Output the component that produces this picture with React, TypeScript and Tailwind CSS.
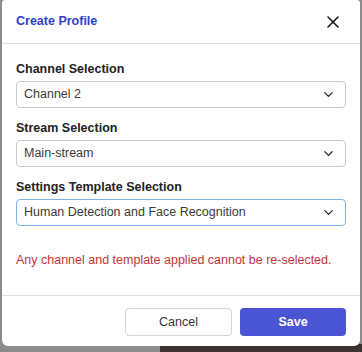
import { ChevronDown, X } from 'lucide-react';

const fields = [
  { label: 'Channel Selection', value: 'Channel 2', focused: false },
  { label: 'Stream Selection', value: 'Main-stream', focused: false },
  { label: 'Settings Template Selection', value: 'Human Detection and Face Recognition', focused: true },
];

function SelectBox({ value, focused }: { value: string; focused: boolean }) {
  return (
    <div
      className={
        focused
          ? 'flex h-[27px] items-center justify-between rounded-[4px] border border-[#7fb0ec] bg-white pl-[7px] pr-[9px]'
          : 'flex h-[27px] items-center justify-between rounded-[4px] border border-[#c9c9c9] bg-white pl-[7px] pr-[9px]'
      }
    >
      <span className="text-[12.5px] text-[#3a3a3a]">{value}</span>
      <ChevronDown size={15} strokeWidth={2} className="text-[#222]" />
    </div>
  );
}

export default function App() {
  return (
    <div className="relative h-[352px] w-[362px] overflow-hidden bg-[#8c8c8c] font-['Liberation_Sans',Arial,sans-serif]">
      {/* 背景里的视频画面 */}
      <div className="absolute bottom-0 left-[160px] h-[8px] w-[202px] bg-[#3a3330]" />

      <div className="relative mx-[2px] flex h-[346px] flex-col rounded-b-[6px] rounded-t-[3px] bg-white">
        {/* 标题栏 */}
        <div className="flex h-[44px] items-center justify-between border-b border-[#dedede] pl-[14px] pr-[17px]">
          <span className="text-[12.5px] font-bold text-[#3040cc]">Create Profile</span>
          <X size={20} strokeWidth={1.8} className="text-[#111]" />
        </div>

        {/* 表单 */}
        <div className="flex flex-1 flex-col px-[14px] pt-[16px]">
          {fields.map((f) => (
            <div key={f.label} className="mb-[11px] flex flex-col">
              <span className="mb-[3px] text-[12.5px] font-bold leading-[18px] text-[#222]">{f.label}</span>
              <SelectBox value={f.value} focused={f.focused} />
            </div>
          ))}
          <p className="mt-[14px] text-[12.5px] leading-[18px] text-[#c6323a]">
            Any channel and template applied cannot be re-selected.
          </p>
        </div>

        {/* 底部按钮 */}
        <div className="flex h-[51px] items-start justify-end gap-[8px] border-t border-[#dedede] pr-[14px] pt-[12px]">
          <button className="h-[28px] w-[107px] rounded-[4px] border border-[#d4d4d4] bg-white text-[12.5px] text-[#333]">
            Cancel
          </button>
          <button className="h-[28px] w-[106px] rounded-[4px] bg-[#4b55d3] text-[12.5px] font-bold text-white">
            Save
          </button>
        </div>
      </div>
    </div>
  );
}
